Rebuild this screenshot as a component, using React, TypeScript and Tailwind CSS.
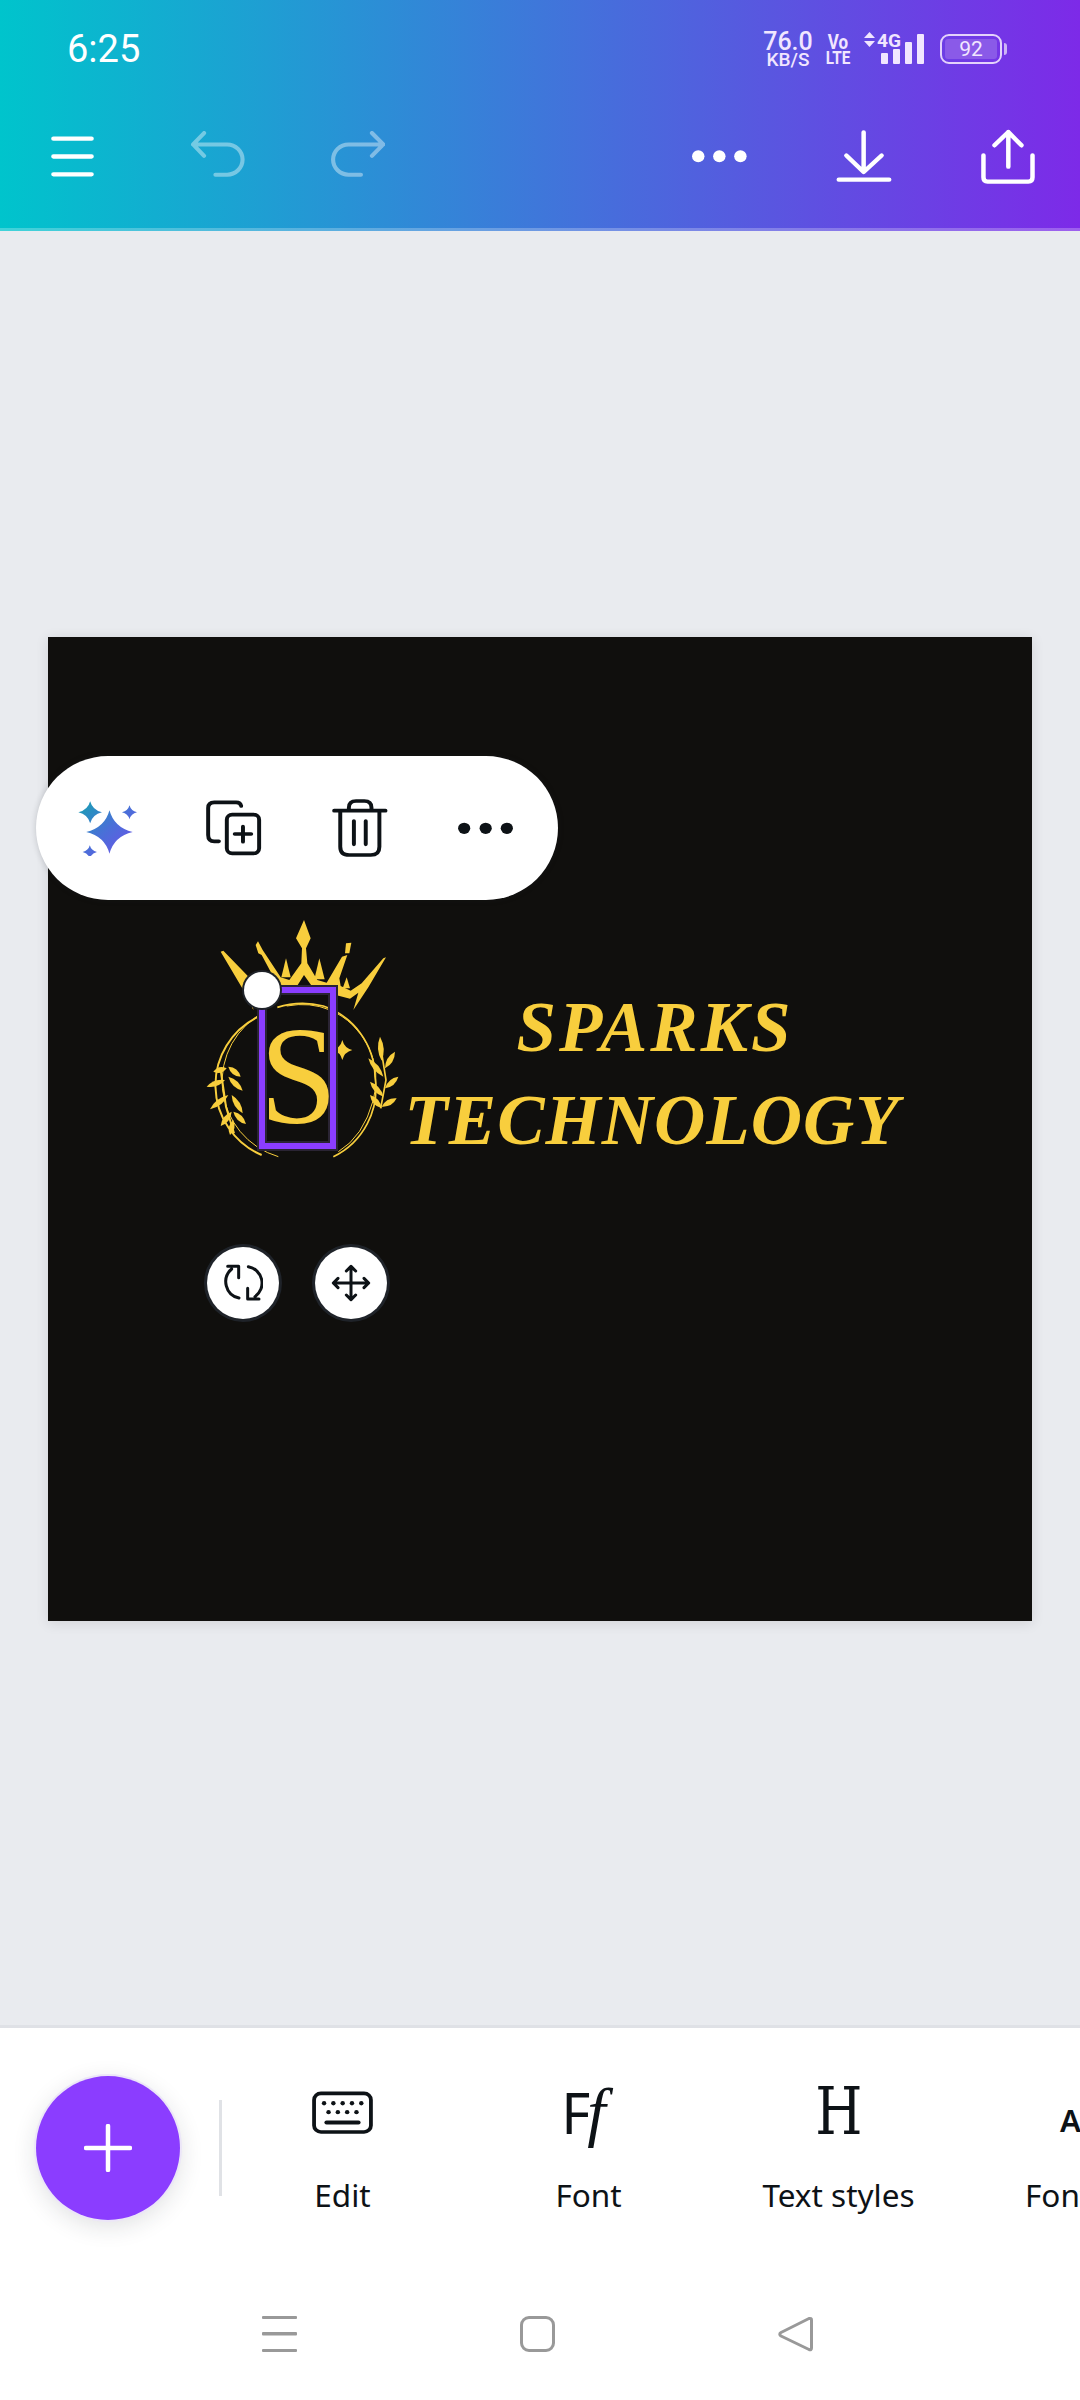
const ink = '#0d1216';
const gold = '#f8ce3d';

// builds one laurel leaf from its base to its tip
function leaf(x0: number, y0: number, x1: number, y1: number, w = 17) {
  const mx = (x0 + x1) / 2;
  const my = (y0 + y1) / 2;
  const dx = x1 - x0;
  const dy = y1 - y0;
  const len = Math.hypot(dx, dy);
  const nx = (-dy / len) * w;
  const ny = (dx / len) * w;
  return `M${x0} ${y0}Q${mx + nx} ${my + ny} ${x1} ${y1}Q${mx - nx} ${my - ny} ${x0} ${y0}Z`;
}

function star(cx: number, cy: number, r: number) {
  const k = r * 0.2;
  return `M${cx} ${cy - r}Q${cx + k} ${cy - k} ${cx + r} ${cy}Q${cx + k} ${cy + k} ${cx} ${cy + r}Q${cx - k} ${cy + k} ${cx - r} ${cy}Q${cx - k} ${cy - k} ${cx} ${cy - r}Z`;
}

const leaves = [
  [110, 505, 70, 515], [115, 500, 152, 530], [105, 540, 50, 560], [115, 530, 158, 572],
  [115, 585, 60, 628], [125, 585, 158, 640], [125, 635, 92, 678], [130, 635, 168, 672],
  [130, 660, 120, 705], [575, 482, 570, 410], [585, 505, 615, 455], [580, 530, 535, 475],
  [585, 565, 625, 530], [580, 590, 540, 545], [575, 620, 620, 595], [575, 625, 540, 585],
];

function LogoMark() {
  return (
    <svg width="230" height="270" viewBox="0 0 690 810" className="absolute left-[142px] top-[263px]">
      <g fill={gold}>
        <path d="M342 60L362 115L348 145L352 190L382 240L410 248L456 170L472 165L448 235L452 258L482 272L515 250L580 175L588 172L535 262L490 330L505 278L480 296L440 286L410 272L372 268L342 225L315 268L270 268L215 165L205 160L197 135L204 124L218 150L226 162L272 232L298 240L334 190L336 145L318 115Z" />
        <path d="M92 155L100 152L180 235L190 330L160 270Z" />
        <path d="M288 175L302 232H274Z" />
        <path d="M388 175L404 238H373Z" />
        <path d="M468 130L484 128L478 160L465 160Z" />
        <path d="M470 232L480 265H458Z" />
        {leaves.map(([a, b, c, d], i) => (
          <path key={i} d={leaf(a, b, c, d)} />
        ))}
        <path d={star(457, 450, 30)} />
      </g>
      <g fill="none" stroke={gold}>
        <path d="M205 350A228 228 0 0 0 215 765" strokeWidth="6" />
        <path d="M225 335A235 235 0 0 0 265 770" strokeWidth="3" />
        <path d="M262 322Q330 300 400 318A228 228 0 0 1 555 530A228 228 0 0 1 430 770" strokeWidth="5" />
        <path d="M290 318Q360 305 420 330A228 228 0 0 1 550 600Q520 710 445 755" strokeWidth="3" />
        <path d="M92 510L108 620L132 700" strokeWidth="6" />
        <path d="M572 440L588 540L572 625" strokeWidth="5" />
      </g>
    </svg>
  );
}

function StatusIcons() {
  return (
    <div className="ml-auto mr-[73px] flex items-center text-[#f1e6ff]">
      <div className="flex w-[50px] flex-col items-center font-['Roboto',sans-serif] font-medium">
        <span className="text-[25px] leading-[20px]">76.0</span>
        <span className="text-[19px] leading-[15px]">KB/S</span>
      </div>
      <div className="ml-[12px] flex w-[26px] scale-x-[0.85] flex-col items-center font-['Roboto',sans-serif] font-bold">
        <span className="text-[20px] leading-[16px]">Vo</span>
        <span className="text-[18px] leading-[15px]">LTE</span>
      </div>
      <svg width="64" height="34" viewBox="862 31 64 34" className="ml-[11px]" fill="currentColor">
        <path d="M869.5 31L875 37H864Z" />
        <path d="M869.5 46L875 40H864Z" />
        <rect x="881" y="52" width="7" height="11" rx="1" />
        <rect x="893" y="48" width="7" height="15" rx="1" />
        <rect x="905" y="41" width="7" height="22" rx="1" />
        <rect x="917" y="33" width="7" height="30" rx="1" />
        <text x="877" y="46" fontFamily="Roboto, sans-serif" fontWeight="700" fontSize="18" textLength="24" lengthAdjust="spacingAndGlyphs">4G</text>
      </svg>
      <div className="ml-[14px] flex h-[30px] w-[62px] items-center justify-center rounded-[9px] border-2 border-[#e4d2fb] p-[3px]">
        <div className="flex h-full w-full items-center justify-center rounded-[3px] bg-[#8a5ae8] font-['Roboto',sans-serif] text-[21px] leading-none">
          92
        </div>
      </div>
      <div className="ml-[2px] h-[12px] w-[3px] rounded-r-sm bg-[#cdb4f5]" />
    </div>
  );
}

function TopBar() {
  return (
    <header className="h-[231px] shrink-0 border-b-[3px] border-white/25 bg-[linear-gradient(90deg,#00c4cc,#7d2ae8)]">
      <div className="flex h-[98px] items-center pl-[67px] font-['Roboto',sans-serif] text-[38px] text-white">
        <span>6:25</span>
        <StatusIcons />
      </div>
      <div className="flex h-[116px] items-center pl-[51px] pr-[43px]">
        <svg width="43" height="41" viewBox="147 405 124 124" preserveAspectRatio="none" fill="none" stroke="white" strokeWidth="13" strokeLinecap="round">
          <path d="M154 413H264M154 467H264M154 521H264" />
        </svg>
        <svg width="55" height="47" viewBox="555 392 160 140" preserveAspectRatio="none" className="ml-[97px] -mt-[4px] opacity-40" fill="none" stroke="white" strokeWidth="12" strokeLinecap="round" strokeLinejoin="round">
          <path d="M593 398L561 432L593 466M561 432H660A45 45 0 0 1 660 522H626" />
        </svg>
        <svg width="55" height="47" viewBox="958 392 160 140" preserveAspectRatio="none" className="ml-[84px] -mt-[4px] opacity-40" fill="none" stroke="white" strokeWidth="12" strokeLinecap="round" strokeLinejoin="round">
          <path d="M1080 398L1113 432L1080 466M1113 432H1012A45 45 0 0 0 1012 522H1048" />
        </svg>
        <svg width="57" height="15" viewBox="440 445 165 45" preserveAspectRatio="none" className="ml-auto" fill="white">
          <circle cx="461" cy="467" r="18" />
          <circle cx="522" cy="467" r="18" />
          <circle cx="583" cy="467" r="18" />
        </svg>
        <svg width="57" height="53" viewBox="860 390 165 160" preserveAspectRatio="none" className="ml-[88px]" fill="none" stroke="white" strokeWidth="13" strokeLinecap="round" strokeLinejoin="round">
          <path d="M940 397V515M890 467L940 517L992 467M868 540H1014" />
        </svg>
        <svg width="57" height="55" viewBox="1278 385 165 165" preserveAspectRatio="none" className="ml-[87px]" fill="none" stroke="white" strokeWidth="13" strokeLinecap="round" strokeLinejoin="round">
          <path d="M1360 498V394M1320 434L1360 394L1398 434M1288 464V530Q1288 543 1300 543H1418Q1430 543 1430 530V464" />
        </svg>
      </div>
    </header>
  );
}

function ObjectToolbar() {
  return (
    <div className="absolute left-[-12px] top-[119px] flex h-[144px] w-[522px] items-center rounded-full bg-white shadow-[0_0_6px_rgba(30,35,45,0.2)]">
      <svg width="59" height="55" viewBox="162 174 165 165" preserveAspectRatio="none" className="ml-[42px]">
        <defs>
          <linearGradient id="spark" gradientUnits="userSpaceOnUse" x1="170" y1="180" x2="310" y2="320">
            <stop offset="0" stopColor="#1a9eb5" />
            <stop offset="0.55" stopColor="#4a6fd8" />
            <stop offset="1" stopColor="#6a55e8" />
          </linearGradient>
        </defs>
        <g fill="url(#spark)">
          <path d={star(250, 267, 65)} />
          <path d={star(196, 208, 33)} />
          <path d={star(306, 208, 21)} />
          <path d={star(195, 327, 20)} />
        </g>
      </svg>
      <svg width="56" height="56" viewBox="522 180 156 168" preserveAspectRatio="none" className="ml-[69px]" fill="none" stroke={ink} strokeWidth="11" strokeLinecap="round" strokeLinejoin="round">
        <path d="M620 198Q618 187 606 187H545Q528 187 528 204V285Q528 304 545 304H558" />
        <rect x="580" y="224" width="90" height="116" rx="15" />
        <path d="M625 260V305M602 282H648" />
      </svg>
      <svg width="56" height="58" viewBox="875 172 156 174" preserveAspectRatio="none" className="ml-[70px]" fill="none" stroke={ink} strokeWidth="11" strokeLinecap="round" strokeLinejoin="round">
        <path d="M881 207H1024M922 205V198Q922 178 942 178H965Q985 178 985 198V205M898 207V315Q898 340 923 340H983Q1007 340 1007 315V207M936 238V308M969 238V308" />
      </svg>
      <svg width="57" height="13" viewBox="1225 245 159 39" preserveAspectRatio="none" className="ml-[69px]" fill={ink}>
        <circle cx="1245" cy="264" r="17" />
        <circle cx="1305" cy="264" r="17" />
        <circle cx="1364" cy="264" r="17" />
      </svg>
    </div>
  );
}

function CanvasControls() {
  return (
    <div className="absolute left-[159px] top-[610px] flex gap-[36px]">
      <div className="flex h-[72px] w-[72px] items-center justify-center rounded-full bg-white shadow-[0_0_0_3px_#1f2329]">
        <svg width="40" height="40" viewBox="98 102 120 120" fill="none" stroke={ink} strokeWidth="9" strokeLinecap="round" strokeLinejoin="round">
          <path d="M146 207A50 50 0 0 1 124 120M112 112H145V146M174 113A50 50 0 0 1 194 203M172 178V210H206" />
        </svg>
      </div>
      <div className="flex h-[72px] w-[72px] items-center justify-center rounded-full bg-white shadow-[0_0_0_3px_#1f2329]">
        <svg width="40" height="40" viewBox="425 102 120 120" fill="none" stroke={ink} strokeWidth="9" strokeLinecap="round" strokeLinejoin="round">
          <path d="M485 112V212M432 162H538M471 126L485 112L499 126M471 198L485 212L499 198M446 148L432 162L446 176M524 148L538 162L524 176" />
        </svg>
      </div>
    </div>
  );
}

function DesignCanvas() {
  return (
    <div className="relative h-[984px] w-[984px] bg-[#100f0d] shadow-[0_2px_12px_rgba(30,35,45,0.12)]">
      <LogoMark />
      <div className="absolute left-[211px] top-[350px] flex h-[162px] w-[77px] items-center justify-center border-[6px] border-[#8b3dff] pl-[2px] pt-[16px] font-['Liberation_Serif',serif] text-[140px] leading-none text-[#f8ce3d] shadow-[0_0_0_2px_#2a2433,inset_0_0_0_2px_#2a2433]">
        S
      </div>
      <div className="absolute left-[196px] top-[335px] h-[36px] w-[36px] rounded-full bg-white shadow-[0_0_0_2px_#1f2329]" />
      <div className="absolute left-[344px] top-[344px] w-[520px] text-center font-['Liberation_Serif',serif] text-[71px] font-bold italic leading-[93px] tracking-[1px] text-[#f8ce3d]">
        <div className="pl-[6px] tracking-[3px]">SPARKS</div>
        <div>TECHNOLOGY</div>
      </div>
      <ObjectToolbar />
      <CanvasControls />
    </div>
  );
}

function ToolItem({ label, width, children }: { label: string; width: string; children: React.ReactNode }) {
  return (
    <div className={`flex shrink-0 flex-col items-center ${width}`}>
      <div className="flex h-[60px] items-center justify-center">{children}</div>
      <span className="mt-[33px] whitespace-nowrap text-[31.5px] leading-[40px] text-[#0d1216]">{label}</span>
    </div>
  );
}

function BottomBar() {
  return (
    <footer className="h-[375px] shrink-0 border-t-[3px] border-[#dfe1e6] bg-white font-['Noto_Sans',sans-serif]">
      <div className="flex h-[240px] overflow-hidden">
        <div className="ml-[36px] mt-[48px] flex h-[144px] w-[144px] shrink-0 items-center justify-center rounded-full bg-[#8b3dff] shadow-[0_0_0_2px_#ece6f8,0_6px_24px_rgba(30,35,45,0.14)]">
          <svg width="48" height="48" viewBox="0 0 48 48" fill="none" stroke="white" strokeWidth="4.5" strokeLinecap="round">
            <path d="M24 2V46M2 24H46" />
          </svg>
        </div>
        <div className="ml-[39px] mt-[72px] h-[96px] w-[3px] shrink-0 bg-[#e0e2e6]" />
        <div className="flex pt-[54px]">
          <ToolItem label="Edit" width="w-[191px] ml-[25px]">
            <svg width="61" height="43" viewBox="905 240 177 130" preserveAspectRatio="none">
              <rect x="911" y="247" width="165" height="117" rx="20" fill="none" stroke={ink} strokeWidth="11" />
              <g fill={ink}>
                {[940, 967, 994, 1021, 1048].map((x) => (
                  <circle key={x} cx={x} cy="277" r="6.5" />
                ))}
                {[953, 980, 1007, 1034].map((x) => (
                  <circle key={x} cx={x} cy="304" r="6.5" />
                ))}
              </g>
              <path d="M947 335H1040" stroke={ink} strokeWidth="12" strokeLinecap="round" />
            </svg>
          </ToolItem>
          <ToolItem label="Font" width="w-[301px]">
            <span className="-ml-[10px] flex items-baseline text-[#0d1216]">
              <span className="text-[56px] leading-none">F</span>
              <span className="-ml-[3px] font-['Liberation_Serif',serif] text-[66px] italic leading-none">f</span>
            </span>
          </ToolItem>
          <ToolItem label="Text styles" width="w-[199px]">
            <span className="scale-x-[0.82] font-['DejaVu_Serif',serif] text-[66px] leading-none text-[#0d1216]">H</span>
          </ToolItem>
          <div className="ml-[87px] flex w-[200px] shrink-0 flex-col">
            <div className="flex h-[60px] items-end pb-[6px] pl-[35px] text-[31px] font-semibold leading-none text-[#0d1216]">A</div>
            <span className="mt-[33px] whitespace-nowrap text-[31.5px] leading-[40px] text-[#0d1216]">Font size</span>
          </div>
        </div>
      </div>
      <div className="flex h-[132px] items-start pl-[262px] pt-[48px]">
        <svg width="35" height="36" viewBox="0 0 35 36" fill="#999999">
          <rect y="0" width="35" height="3" rx="1" />
          <rect y="16" width="35" height="3.5" rx="1" />
          <rect y="33" width="35" height="3" rx="1" />
        </svg>
        <div className="ml-[223px] h-[36px] w-[35px] rounded-[9px] border-[3px] border-[#999999]" />
        <svg width="35" height="36" viewBox="0 0 35 36" className="ml-[223px]" fill="none" stroke="#999999" strokeWidth="3" strokeLinejoin="round">
          <path d="M31 2.5Q33.5 2 33.5 4V32Q33.5 34.5 31 33.5L3 20Q0.5 18 3 16.5Z" />
        </svg>
      </div>
    </footer>
  );
}

export default function App() {
  return (
    <div className="flex h-[2400px] w-[1080px] flex-col overflow-hidden bg-[#e9ebef]">
      <TopBar />
      <main className="flex min-h-0 flex-1 items-center justify-center pt-[2px]">
        <DesignCanvas />
      </main>
      <BottomBar />
    </div>
  );
}
